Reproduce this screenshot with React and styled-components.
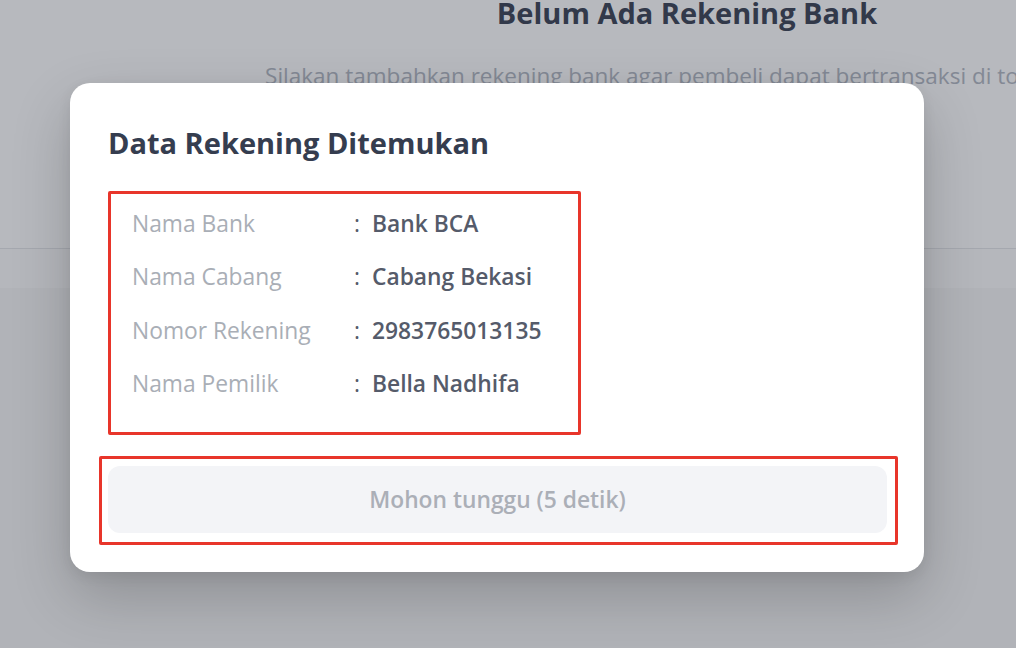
import React from 'react';
import styled, { createGlobalStyle } from 'styled-components';

const GlobalStyle = createGlobalStyle`
  html, body {
    margin: 0;
    padding: 0;
  }
  body {
    font-family: "Open Sans", "Noto Sans", sans-serif;
    background: #ffffff;
  }
`;

const account = [
  { label: 'Nama Bank', value: 'Bank BCA' },
  { label: 'Nama Cabang', value: 'Cabang Bekasi' },
  { label: 'Nomor Rekening', value: '2983765013135' },
  { label: 'Nama Pemilik', value: 'Bella Nadhifa' },
];

const App = () => {
  return (
    <>
      <GlobalStyle />
      <Page>
        <Layout>
          <Sidebar />
          <Main>
            <EmptyTitle>Belum Ada Rekening Bank</EmptyTitle>
            <EmptyText>
              Silakan tambahkan rekening bank agar pembeli dapat bertransaksi di toko kamu
            </EmptyText>
          </Main>
        </Layout>
        <Divider />
        <Section />

        <Overlay>
          <Modal>
            <Title>Data Rekening Ditemukan</Title>
            <InfoBox>
              {account.map((row) => (
                <Row key={row.label}>
                  <Label>{row.label}</Label>
                  <Colon>:</Colon>
                  <Value>{row.value}</Value>
                </Row>
              ))}
            </InfoBox>
            <ButtonFrame>
              <WaitButton disabled>Mohon tunggu (5 detik)</WaitButton>
            </ButtonFrame>
          </Modal>
        </Overlay>
      </Page>
    </>
  );
};

export default App;

const Page = styled.div`
  position: relative;
  width: 100%;
  height: 100vh;
  overflow: hidden;
  background: #f6f6f7;
  display: flex;
  flex-direction: column;
`;

const Layout = styled.div`
  display: flex;
  height: 248px;
  background: #ffffff;
`;

const Sidebar = styled.div`
  width: 358px;
  flex-shrink: 0;
`;

const Main = styled.div`
  flex: 1;
  min-width: 0;
  display: flex;
  flex-direction: column;
  align-items: center;
`;

const EmptyTitle = styled.h2`
  margin: -5px 0 0;
  font-size: 29px;
  line-height: 36px;
  font-weight: 700;
  color: #414859;
  white-space: nowrap;
`;

const EmptyText = styled.p`
  margin: 30px 0 0;
  font-size: 22.5px;
  line-height: 30px;
  color: #b5bac4;
  white-space: nowrap;
`;

const Divider = styled.div`
  height: 1px;
  background: #e6e7ea;
`;

const Section = styled.div`
  height: 39px;
  background: #fcfcfc;
`;

const Overlay = styled.div`
  position: absolute;
  inset: 0;
  background: rgba(17, 24, 39, 0.3);
  display: flex;
  align-items: center;
  justify-content: center;
  padding: 6px 22px 0 0;
`;

const Modal = styled.div`
  width: 854px;
  box-sizing: border-box;
  background: #ffffff;
  border-radius: 20px;
  padding: 42px 37px 27px 38px;
  box-shadow: 0 24px 60px rgba(0, 0, 0, 0.2), 0 4px 14px rgba(0, 0, 0, 0.07);
  display: flex;
  flex-direction: column;
`;

const Title = styled.h3`
  margin: 0 0 30px;
  font-size: 29px;
  line-height: 36px;
  font-weight: 700;
  color: #353d4f;
`;

const InfoBox = styled.div`
  width: 473px;
  height: 244px;
  box-sizing: border-box;
  border: 3px solid #e8352a;
  border-radius: 2px;
  padding: 3px 21px 18px;
`;

const Row = styled.div`
  display: grid;
  grid-template-columns: 222px 18px 1fr;
  align-items: center;
  height: 53.5px;
  font-size: 22.8px;
`;

const Label = styled.span`
  color: #a9aeb6;
`;

const Colon = styled.span`
  color: #555b6a;
`;

const Value = styled.span`
  color: #555b6a;
  font-weight: 600;
`;

const ButtonFrame = styled.div`
  margin: 21px -11px 0 -9px;
  padding: 7px 8px 9px 6px;
  border: 3px solid #e8352a;
  border-radius: 2px;
`;

const WaitButton = styled.button`
  display: block;
  width: 100%;
  height: 67px;
  border: none;
  border-radius: 12px;
  background: #f3f4f7;
  color: #abafb7;
  font-family: inherit;
  font-size: 22.8px;
  font-weight: 600;
  cursor: not-allowed;
`;
